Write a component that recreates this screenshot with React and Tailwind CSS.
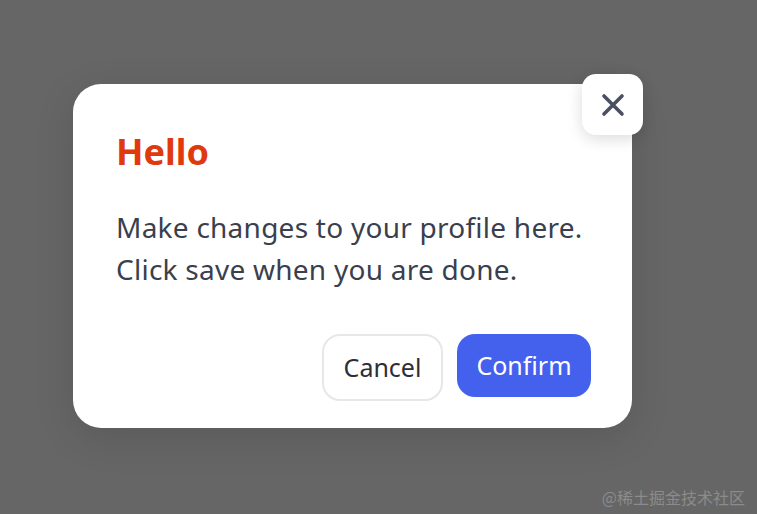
export default function App() {
  return (
    <div
      className="relative flex h-[514px] w-[757px] items-start overflow-hidden bg-[#666666] pl-[73px] pt-[84px]"
      style={{ fontFamily: '"Noto Sans", "Open Sans", sans-serif' }}
    >
      <div className="relative w-[559px] rounded-[28px] bg-white pb-[27px] pl-[43px] pr-[41px] pt-[44px] shadow-[0_10px_40px_rgba(0,0,0,0.12)]">
        <button className="absolute right-[-11px] top-[-10px] flex h-[61px] w-[61px] items-center justify-center rounded-[14px] bg-white shadow-[0_4px_16px_rgba(0,0,0,0.14)]">
          <svg width="24" height="24" viewBox="0 0 24 24" fill="none" stroke="#4b5060" strokeWidth="3.6" strokeLinecap="round">
            <path d="M3 3 21 21M21 3 3 21" />
          </svg>
        </button>

        <h2 className="text-[36px] font-bold leading-[48px] text-[#e0390e]">Hello</h2>

        <p className="mt-[30px] text-[28px] leading-[42px] tracking-[0.25px] text-[#3a3f4e]">
          Make changes to your profile here.
          <br />
          Click save when you are done.
        </p>

        <div className="mt-[44px] flex justify-end gap-[14px]">
          <button className="flex h-[67px] w-[121px] items-center justify-center rounded-[18px] border-2 border-[#e6e7ea] bg-white text-[25px] text-[#2d2f36]">
            Cancel
          </button>
          <button className="flex h-[63px] w-[134px] items-center justify-center rounded-[18px] bg-[#4461ee] text-[25px] text-white">
            Confirm
          </button>
        </div>
      </div>

      <div
        className="absolute bottom-[5px] right-[12px] text-[16px] text-white/25"
        style={{ fontFamily: '"Noto Sans CJK SC", sans-serif' }}
      >
        @稀土掘金技术社区
      </div>
    </div>
  );
}
